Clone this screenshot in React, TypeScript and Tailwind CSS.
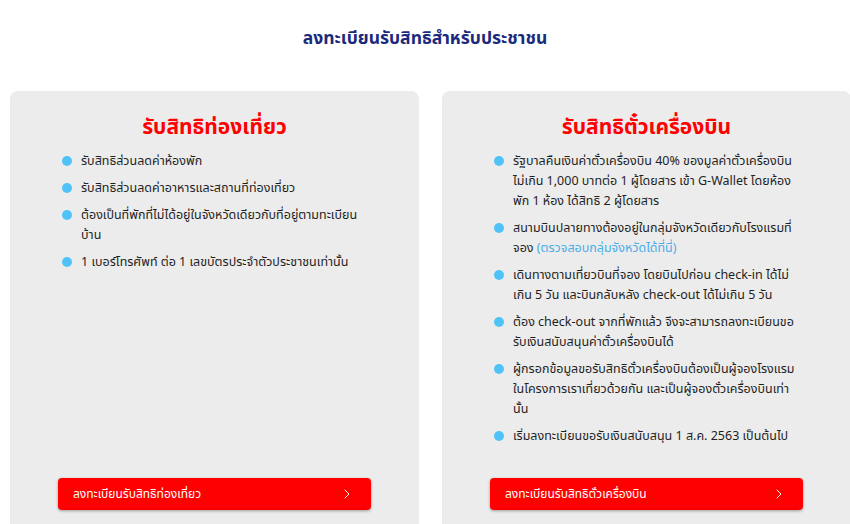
import { ChevronRight } from "lucide-react";
import type { ReactNode } from "react";

// each item is a list of lines, broken where the design breaks them
const tourItems: ReactNode[][] = [
  ["รับสิทธิส่วนลดค่าห้องพัก"],
  ["รับสิทธิส่วนลดค่าอาหารและสถานที่ท่องเที่ยว"],
  ["ต้องเป็นที่พักที่ไม่ได้อยู่ในจังหวัดเดียวกับที่อยู่ตามทะเบียน", "บ้าน"],
  ["1 เบอร์โทรศัพท์ ต่อ 1 เลขบัตรประจำตัวประชาชนเท่านั้น"],
];

const flightItems: ReactNode[][] = [
  [
    "รัฐบาลคืนเงินค่าตั๋วเครื่องบิน 40% ของมูลค่าตั๋วเครื่องบิน",
    "ไม่เกิน 1,000 บาทต่อ 1 ผู้โดยสาร เข้า G-Wallet โดยห้อง",
    "พัก 1 ห้อง ได้สิทธิ 2 ผู้โดยสาร",
  ],
  [
    "สนามบินปลายทางต้องอยู่ในกลุ่มจังหวัดเดียวกับโรงแรมที่",
    <>
      จอง <span className="text-[#4aaee8]">(ตรวจสอบกลุ่มจังหวัดได้ที่นี่)</span>
    </>,
  ],
  [
    "เดินทางตามเที่ยวบินที่จอง โดยบินไปก่อน check-in ได้ไม่",
    "เกิน 5 วัน และบินกลับหลัง check-out ได้ไม่เกิน 5 วัน",
  ],
  ["ต้อง check-out จากที่พักแล้ว จึงจะสามารถลงทะเบียนขอ", "รับเงินสนับสนุนค่าตั๋วเครื่องบินได้"],
  [
    "ผู้กรอกข้อมูลขอรับสิทธิตั๋วเครื่องบินต้องเป็นผู้จองโรงแรม",
    "ในโครงการเราเที่ยวด้วยกัน และเป็นผู้จองตั๋วเครื่องบินเท่า",
    "นั้น",
  ],
  ["เริ่มลงทะเบียนขอรับเงินสนับสนุน 1 ส.ค. 2563 เป็นต้นไป"],
];

const BulletList = ({ items }: { items: ReactNode[][] }) => (
  <ul className="flex flex-col gap-[7px]">
    {items.map((lines, i) => (
      <li key={i} className="flex items-start text-[12.5px] leading-[20px] text-[#1f1f1f]">
        <span className="mt-[5px] ml-[4px] mr-[9px] size-[10px] shrink-0 rounded-full bg-[#4fc3f7]" />
        <div className="flex flex-col">
          {lines.map((line, j) => (
            <span key={j} className="whitespace-nowrap">
              {line}
            </span>
          ))}
        </div>
      </li>
    ))}
  </ul>
);

const Card = ({ title, items, button }: { title: string; items: ReactNode[][]; button: string }) => (
  <div className="flex h-[450px] w-[409px] shrink-0 flex-col rounded-[8px] bg-[#ececec] px-[48px] pt-[22px] pb-[31px]">
    <h2 className="text-center text-[21px] font-bold leading-[26px] text-[#ff0000]">{title}</h2>
    <div className="mt-[12px] flex-1">
      <BulletList items={items} />
    </div>
    <button className="flex h-[32px] w-full items-center justify-between rounded-[4px] bg-[#ff0000] pl-[15px] pr-[16px] text-[12px] text-white shadow-[0_1px_3px_rgba(0,0,0,0.35)]">
      <span>{button}</span>
      <ChevronRight strokeWidth={1.5} className="size-[16px]" />
    </button>
  </div>
);

export default function App() {
  return (
    <div
      className="h-[524px] w-[850px] overflow-hidden bg-white"
      style={{ fontFamily: '"Noto Sans", "Noto Sans Thai", "DejaVu Sans", sans-serif' }}
    >
      <h1 className="pt-[25px] text-center text-[17.5px] font-bold leading-[24px] text-[#1b2a7c]">
        ลงทะเบียนรับสิทธิสำหรับประชาชน
      </h1>
      <div className="mt-[42px] flex gap-[23px] pl-[10px]">
        <Card title="รับสิทธิท่องเที่ยว" items={tourItems} button="ลงทะเบียนรับสิทธิท่องเที่ยว" />
        <Card title="รับสิทธิตั๋วเครื่องบิน" items={flightItems} button="ลงทะเบียนรับสิทธิตั๋วเครื่องบิน" />
      </div>
    </div>
  );
}
